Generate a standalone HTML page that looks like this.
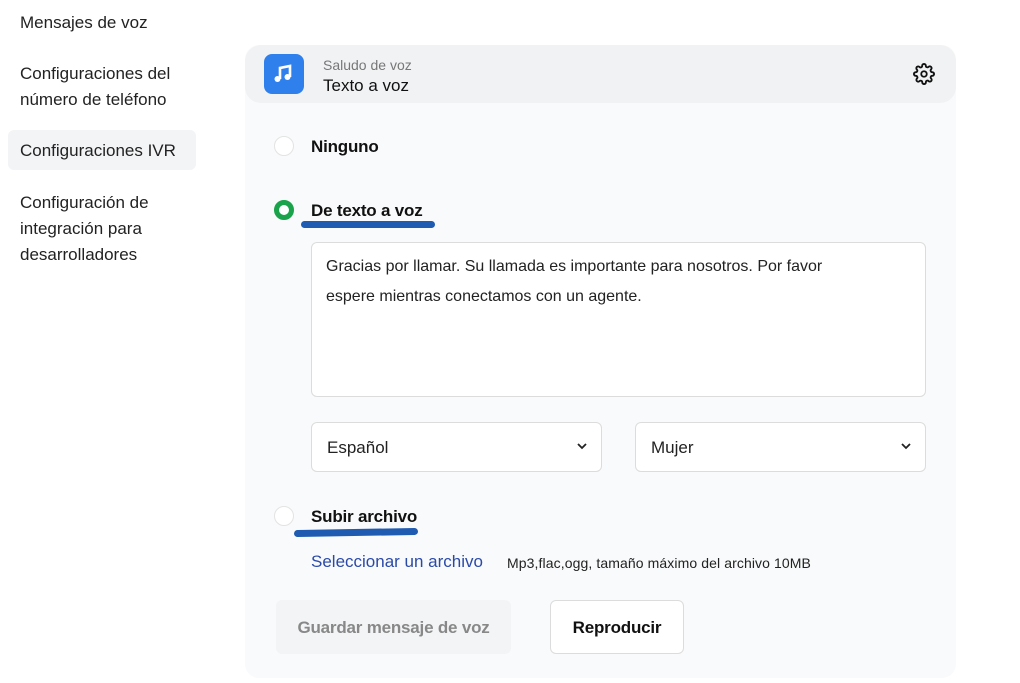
<!DOCTYPE html>
<html><head><style>
*{margin:0;padding:0;box-sizing:border-box}
body{width:1020px;height:683px;background:#fff;font-family:"Liberation Sans",sans-serif;position:relative;overflow:hidden;color:#111}
.a{position:absolute}
.nav{font-size:17px;color:#222;line-height:26px}
.panel{left:245px;top:45px;width:711px;height:633px;background:#f9fafb;border-radius:14px}
.hdr{left:245px;top:45px;width:711px;height:58px;background:#f1f2f4;border-radius:16px}
.radio{width:20px;height:20px;border-radius:50%;border:1px solid #e3e3e3;background:#fff}
.lbl{font-size:17px;font-weight:bold;color:#111;letter-spacing:-0.2px}
.ul{height:7px;background:#1f5bb0;border-radius:4px}
.box{background:#fff;border:1px solid #dcdcdc;border-radius:6px}
</style></head><body>
<div class="a nav" style="left:20px;top:10px">Mensajes de voz</div>
<div class="a nav" style="left:20px;top:61px">Configuraciones del<br>número de teléfono</div>
<div class="a" style="left:8px;top:130px;width:188px;height:40px;background:#f3f4f6;border-radius:6px"></div>
<div class="a nav" style="left:20px;top:138px">Configuraciones IVR</div>
<div class="a nav" style="left:20px;top:190px">Configuración de<br>integración para<br>desarrolladores</div>

<div class="a panel"></div>
<div class="a hdr"></div>
<div class="a" style="left:264px;top:54px;width:40px;height:40px;background:#2f80ed;border-radius:8px">
<svg width="40" height="40" viewBox="0 0 40 40"><path d="M16 25V14l10-2v11" stroke="#fff" stroke-width="2.6" fill="none"/><circle cx="13.5" cy="25" r="3" fill="#fff"/><circle cx="23.5" cy="23" r="3" fill="#fff"/></svg></div>
<div class="a" style="left:323px;top:57px;font-size:14px;color:#777">Saludo de voz</div>
<div class="a" style="left:323px;top:76px;font-size:17px;color:#111">Texto a voz</div>
<svg class="a" style="left:913px;top:63px" width="22" height="22" viewBox="0 0 24 24" fill="none" stroke="#111" stroke-width="2"><circle cx="12" cy="12" r="3"/><path d="M19.4 15a1.65 1.65 0 0 0 .33 1.82l.06.06a2 2 0 1 1-2.830 2.83l-.06-.06a1.65 1.65 0 0 0-1.82-.33 1.65 1.65 0 0 0-1 1.51V21a2 2 0 1 1-4 0v-.09A1.65 1.65 0 0 0 9 19.4a1.65 1.65 0 0 0-1.820.33l-.06.06a2 2 0 1 1-2.83-2.83l.06-.06A1.65 1.65 0 0 0 4.68 15a1.65 1.65 0 0 0-1.51-1H3a2 2 0 1 1 0-4h.09A1.65 1.65 0 0 0 4.6 9a1.65 1.65 0 0 0-.33-1.82l-.06-.06a2 2 0 1 1 2.83-2.830l.06.06A1.65 1.65 0 0 0 9 4.68a1.65 1.65 0 0 0 1-1.51V3a2 2 0 1 1 4 0v.09a1.65 1.65 0 0 0 1 1.51 1.65 1.65 0 0 0 1.82-.33l.06-.06a2 2 0 1 1 2.83 2.830l-.06.06A1.65 1.65 0 0 0 19.4 9a1.65 1.65 0 0 0 1.51 1H21a2 2 0 1 1 0 4h-.09a1.65 1.65 0 0 0-1.51 1z"/></svg>

<div class="a radio" style="left:274px;top:136px"></div>
<div class="a lbl" style="left:311px;top:137px">Ninguno</div>
<div class="a radio" style="left:274px;top:200px;border:5px solid #1aa34a"></div>
<div class="a lbl" style="left:311px;top:201px">De texto a voz</div>
<div class="a ul" style="left:301px;top:221px;width:134px"></div>

<div class="a box" style="left:311px;top:242px;width:615px;height:155px"></div>
<div class="a" style="left:326px;top:252px;font-size:16px;line-height:30px;color:#222;width:540px">Gracias por llamar. Su llamada es importante para nosotros. Por favor espere mientras conectamos con un agente.</div>

<div class="a box" style="left:311px;top:422px;width:291px;height:50px"></div>
<div class="a" style="left:327px;top:438px;font-size:17px;color:#222">Español</div>
<svg class="a" style="left:576px;top:441px" width="12" height="10" viewBox="0 0 12 10"><path d="M2 3l4 4 4-4" stroke="#222" stroke-width="1.8" fill="none"/></svg>
<div class="a box" style="left:635px;top:422px;width:291px;height:50px"></div>
<div class="a" style="left:651px;top:438px;font-size:17px;color:#222">Mujer</div>
<svg class="a" style="left:900px;top:441px" width="12" height="10" viewBox="0 0 12 10"><path d="M2 3l4 4 4-4" stroke="#222" stroke-width="1.8" fill="none"/></svg>

<div class="a radio" style="left:274px;top:506px"></div>
<div class="a lbl" style="left:311px;top:507px">Subir archivo</div>
<div class="a ul" style="left:294px;top:529px;width:124px;transform:rotate(-1deg)"></div>
<div class="a" style="left:311px;top:552px;font-size:17px;color:#2a4aa8">Seleccionar un archivo</div>
<div class="a" style="left:507px;top:555px;font-size:14px;color:#222;letter-spacing:0.1px">Mp3,flac,ogg, tamaño máximo del archivo 10MB</div>

<div class="a" style="left:276px;top:600px;width:235px;height:54px;background:#f3f4f6;border-radius:6px"></div>
<div class="a" style="left:276px;top:618px;width:235px;text-align:center;font-size:17px;font-weight:bold;color:#888;letter-spacing:-0.2px">Guardar mensaje de voz</div>
<div class="a box" style="left:550px;top:600px;width:134px;height:54px"></div>
<div class="a" style="left:550px;top:618px;width:134px;text-align:center;font-size:17px;font-weight:bold;color:#111;letter-spacing:-0.2px">Reproducir</div>
</body></html>
